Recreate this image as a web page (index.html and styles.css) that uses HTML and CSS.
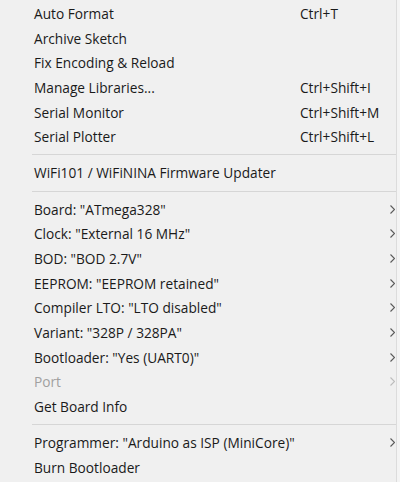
FILE: index.html
```html
<!DOCTYPE html>
<html lang="en">
<head>
    <meta charset="UTF-8">
    <title>Tools</title>
    <link rel="stylesheet" href="styles.css">
</head>
<body>
    <div class="menu">
        <div class="item"><span class="label">Auto Format</span><span class="key">Ctrl+T</span></div>
        <div class="item"><span class="label">Archive Sketch</span></div>
        <div class="item"><span class="label">Fix Encoding &amp; Reload</span></div>
        <div class="item"><span class="label">Manage Libraries...</span><span class="key">Ctrl+Shift+I</span></div>
        <div class="item"><span class="label">Serial Monitor</span><span class="key">Ctrl+Shift+M</span></div>
        <div class="item"><span class="label">Serial Plotter</span><span class="key">Ctrl+Shift+L</span></div>
        <div class="sep"></div>
        <div class="item"><span class="label">WiFi101 / WiFiNINA Firmware Updater</span></div>
        <div class="sep"></div>
        <div class="item"><span class="label">Board: "ATmega328"</span><svg class="arrow" viewBox="0 0 5 9"><path d="M0.5 0.5 L4.5 4.5 L0.5 8.5"/></svg></div>
        <div class="item"><span class="label">Clock: "External 16 MHz"</span><svg class="arrow" viewBox="0 0 5 9"><path d="M0.5 0.5 L4.5 4.5 L0.5 8.5"/></svg></div>
        <div class="item"><span class="label">BOD: "BOD 2.7V"</span><svg class="arrow" viewBox="0 0 5 9"><path d="M0.5 0.5 L4.5 4.5 L0.5 8.5"/></svg></div>
        <div class="item"><span class="label">EEPROM: "EEPROM retained"</span><svg class="arrow" viewBox="0 0 5 9"><path d="M0.5 0.5 L4.5 4.5 L0.5 8.5"/></svg></div>
        <div class="item"><span class="label">Compiler LTO: "LTO disabled"</span><svg class="arrow" viewBox="0 0 5 9"><path d="M0.5 0.5 L4.5 4.5 L0.5 8.5"/></svg></div>
        <div class="item"><span class="label">Variant: "328P / 328PA"</span><svg class="arrow" viewBox="0 0 5 9"><path d="M0.5 0.5 L4.5 4.5 L0.5 8.5"/></svg></div>
        <div class="item"><span class="label">Bootloader: "Yes (UART0)"</span><svg class="arrow" viewBox="0 0 5 9"><path d="M0.5 0.5 L4.5 4.5 L0.5 8.5"/></svg></div>
        <div class="item disabled"><span class="label">Port</span><svg class="arrow" viewBox="0 0 5 9"><path d="M0.5 0.5 L4.5 4.5 L0.5 8.5"/></svg></div>
        <div class="item"><span class="label">Get Board Info</span></div>
        <div class="sep"></div>
        <div class="item"><span class="label">Programmer: "Arduino as ISP (MiniCore)"</span><svg class="arrow" viewBox="0 0 5 9"><path d="M0.5 0.5 L4.5 4.5 L0.5 8.5"/></svg></div>
        <div class="item"><span class="label">Burn Bootloader</span></div>
    </div>
</body>
</html>
```

FILE: styles.css
```css
body {
    margin: 0;
    background-color: #f4f4f4;
    font-family: 'Open Sans', 'Noto Sans', sans-serif;
    font-size: 13.7px;
    color: #1a1a1a;
}
.menu {
    width: 397px;
    background-color: #f0f0f0;
    border-right: 1px solid #dcdcdc;
    padding-top: 1px;
    height: 482px;
    box-sizing: border-box;
}
.item {
    display: flex;
    align-items: center;
    height: 24.7px;
    padding-left: 34px;
    padding-right: 1px;
}
.label {
    flex: 1;
    white-space: nowrap;
}
.key {
    width: 95px;
}
.arrow {
    width: 5px;
    height: 9px;
    fill: none;
    stroke: #5a5a5a;
    stroke-width: 1.1;
}
.disabled {
    color: #a0a0a0;
}
.disabled .arrow {
    stroke: #bcbcbc;
}
.sep {
    height: 11.5px;
    display: flex;
    align-items: center;
    padding-left: 32px;
}
.sep::after {
    content: '';
    flex: 1;
    height: 1px;
    background-color: #d6d6d6;
}
```
